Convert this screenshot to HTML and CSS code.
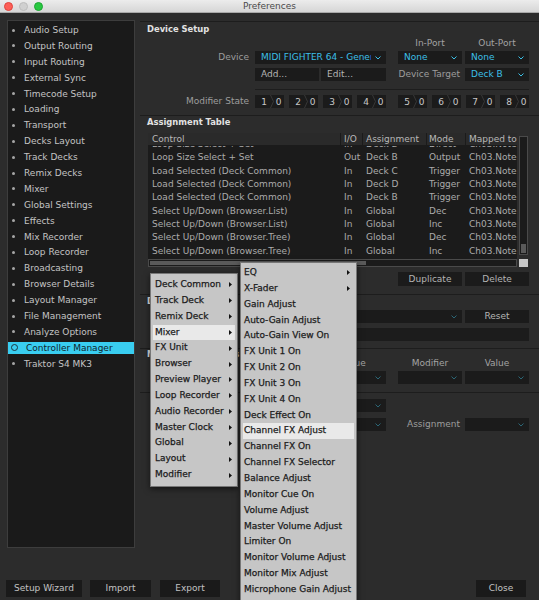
FILE: index.html
```html
<!DOCTYPE html>
<html>
<head>
<meta charset="utf-8">
<title>Preferences</title>
<link rel="stylesheet" href="styles.css">
</head>
<body>
<div class="app">
  <header class="titlebar">
    <div class="lights"><span class="light red"></span><span class="light gray"></span><span class="light green"></span></div>
    <div class="title">Preferences</div>
  </header>

  <div class="content">
    <nav class="sidebar">
      <ul>
        <li>Audio Setup</li>
        <li>Output Routing</li>
        <li>Input Routing</li>
        <li>External Sync</li>
        <li>Timecode Setup</li>
        <li>Loading</li>
        <li>Transport</li>
        <li>Decks Layout</li>
        <li>Track Decks</li>
        <li>Remix Decks</li>
        <li>Mixer</li>
        <li>Global Settings</li>
        <li>Effects</li>
        <li>Mix Recorder</li>
        <li>Loop Recorder</li>
        <li>Broadcasting</li>
        <li>Browser Details</li>
        <li>Layout Manager</li>
        <li>File Management</li>
        <li>Analyze Options</li>
        <li class="sel">Controller Manager</li>
        <li>Traktor S4 MK3</li>
      </ul>
    </nav>

    <main class="main">
      <section class="sec sec1">
        <h2 class="hd hd1">Device Setup</h2>
        <div class="grow ports">
          <span class="plbl cc">In-Port</span>
          <span class="plbl cd">Out-Port</span>
        </div>
        <div class="grow r13 mt2">
          <span class="lbl">Device</span>
          <div class="dd cab on"><span class="ddt">MIDI FIGHTER 64 - Generic</span><svg class="chev" viewBox="0 0 6 4"><polyline points="0.5,0.5 3,3 5.5,0.5"/></svg></div>
          <div class="dd cc on"><span class="ddt">None</span><svg class="chev" viewBox="0 0 6 4"><polyline points="0.5,0.5 3,3 5.5,0.5"/></svg></div>
          <div class="dd cd on"><span class="ddt">None</span><svg class="chev" viewBox="0 0 6 4"><polyline points="0.5,0.5 3,3 5.5,0.5"/></svg></div>
        </div>
        <div class="grow r13 mt4">
          <div class="btn ca left">Add...</div>
          <div class="btn cb left">Edit...</div>
          <span class="lbl2 cc">Device Target</span>
          <div class="dd cd on"><span class="ddt">Deck B</span><svg class="chev" viewBox="0 0 6 4"><polyline points="0.5,0.5 3,3 5.5,0.5"/></svg></div>
        </div>
        <div class="grow sepr">
          <div class="sep cabcd"></div>
        </div>
        <div class="grow r13 mt5">
          <span class="lbl">Modifier State</span>
          <div class="mods cab">
            <div class="mod"><span class="mk">1</span><svg class="mdiv" viewBox="0 0 4 13"><polyline points="0.5,0 3.5,6.5 0.5,13"/></svg><span class="mv">0</span></div>
            <div class="mod"><span class="mk">2</span><svg class="mdiv" viewBox="0 0 4 13"><polyline points="0.5,0 3.5,6.5 0.5,13"/></svg><span class="mv">0</span></div>
            <div class="mod"><span class="mk">3</span><svg class="mdiv" viewBox="0 0 4 13"><polyline points="0.5,0 3.5,6.5 0.5,13"/></svg><span class="mv">0</span></div>
            <div class="mod"><span class="mk">4</span><svg class="mdiv" viewBox="0 0 4 13"><polyline points="0.5,0 3.5,6.5 0.5,13"/></svg><span class="mv">0</span></div>
          </div>
          <div class="mods ccd">
            <div class="mod"><span class="mk">5</span><svg class="mdiv" viewBox="0 0 4 13"><polyline points="0.5,0 3.5,6.5 0.5,13"/></svg><span class="mv">0</span></div>
            <div class="mod"><span class="mk">6</span><svg class="mdiv" viewBox="0 0 4 13"><polyline points="0.5,0 3.5,6.5 0.5,13"/></svg><span class="mv">0</span></div>
            <div class="mod"><span class="mk">7</span><svg class="mdiv" viewBox="0 0 4 13"><polyline points="0.5,0 3.5,6.5 0.5,13"/></svg><span class="mv">0</span></div>
            <div class="mod"><span class="mk">8</span><svg class="mdiv" viewBox="0 0 4 13"><polyline points="0.5,0 3.5,6.5 0.5,13"/></svg><span class="mv">0</span></div>
          </div>
        </div>
      </section>

      <section class="sec sec2">
        <h2 class="hd">Assignment Table</h2>
        <div class="tarea">
          <div class="tmain">
            <div class="tbl">
              <div class="thead">
                <span class="tc c1">Control</span><span class="tc c2">I/O</span><span class="tc c3">Assignment</span><span class="tc c4">Mode</span><span class="tc c5">Mapped to</span>
              </div>
              <div class="tbody">
                <div class="tscroll">
                  <div class="tr"><span class="tc c1">Loop Size Select + Set</span><span class="tc c2">In</span><span class="tc c3">Deck B</span><span class="tc c4">Direct</span><span class="tc c5">Ch03.Note</span></div>
                  <div class="tr"><span class="tc c1">Loop Size Select + Set</span><span class="tc c2">Out</span><span class="tc c3">Deck B</span><span class="tc c4">Output</span><span class="tc c5">Ch03.Note</span></div>
                  <div class="tr"><span class="tc c1">Load Selected (Deck Common)</span><span class="tc c2">In</span><span class="tc c3">Deck C</span><span class="tc c4">Trigger</span><span class="tc c5">Ch03.Note</span></div>
                  <div class="tr"><span class="tc c1">Load Selected (Deck Common)</span><span class="tc c2">In</span><span class="tc c3">Deck D</span><span class="tc c4">Trigger</span><span class="tc c5">Ch03.Note</span></div>
                  <div class="tr"><span class="tc c1">Load Selected (Deck Common)</span><span class="tc c2">In</span><span class="tc c3">Deck B</span><span class="tc c4">Trigger</span><span class="tc c5">Ch03.Note</span></div>
                  <div class="tr"><span class="tc c1">Select Up/Down (Browser.List)</span><span class="tc c2">In</span><span class="tc c3">Global</span><span class="tc c4">Dec</span><span class="tc c5">Ch03.Note</span></div>
                  <div class="tr"><span class="tc c1">Select Up/Down (Browser.List)</span><span class="tc c2">In</span><span class="tc c3">Global</span><span class="tc c4">Inc</span><span class="tc c5">Ch03.Note</span></div>
                  <div class="tr"><span class="tc c1">Select Up/Down (Browser.Tree)</span><span class="tc c2">In</span><span class="tc c3">Global</span><span class="tc c4">Dec</span><span class="tc c5">Ch03.Note</span></div>
                  <div class="tr"><span class="tc c1">Select Up/Down (Browser.Tree)</span><span class="tc c2">In</span><span class="tc c3">Global</span><span class="tc c4">Inc</span><span class="tc c5">Ch03.Note</span></div>
                </div>
              </div>
            </div>
            <div class="hscroll"><div class="hthumb"></div></div>
          </div>
          <div class="tside">
            <div class="vscroll"><div class="vthumb"></div></div>
            <div class="corner"></div>
          </div>
        </div>
        <div class="grow r14 mt5">
          <div class="btn cc">Duplicate</div>
          <div class="btn cd">Delete</div>
        </div>
      </section>

      <section class="sec sec3">
        <h2 class="hd">Device Mapping</h2>
        <div class="grow r13 mt3">
          <div class="dd cabc"><span class="ddt"></span><svg class="chev dim" viewBox="0 0 6 4"><polyline points="0.5,0.5 3,3 5.5,0.5"/></svg></div>
          <div class="btn cd">Reset</div>
        </div>
        <div class="grow r13 mt5">
          <div class="field cabcd"></div>
        </div>
      </section>

      <section class="sec sec4">
        <h2 class="hd hd4">Modifier Conditions</h2>
        <div class="grow labels">
          <span class="clbl cb">Value</span>
          <span class="clbl cc">Modifier</span>
          <span class="clbl cd">Value</span>
        </div>
        <div class="grow r13 mt3">
          <div class="dd ca"><span class="ddt"></span><svg class="chev dim" viewBox="0 0 6 4"><polyline points="0.5,0.5 3,3 5.5,0.5"/></svg></div>
          <div class="dd cb"><span class="ddt"></span><svg class="chev dim" viewBox="0 0 6 4"><polyline points="0.5,0.5 3,3 5.5,0.5"/></svg></div>
          <div class="dd cc"><span class="ddt"></span><svg class="chev dim" viewBox="0 0 6 4"><polyline points="0.5,0.5 3,3 5.5,0.5"/></svg></div>
          <div class="dd cd"><span class="ddt"></span><svg class="chev dim" viewBox="0 0 6 4"><polyline points="0.5,0.5 3,3 5.5,0.5"/></svg></div>
        </div>
      </section>

      <section class="sec sec5">
        <div class="grow r13 mt6">
          <div class="dd cab"><span class="ddt"></span><svg class="chev dim" viewBox="0 0 6 4"><polyline points="0.5,0.5 3,3 5.5,0.5"/></svg></div>
        </div>
        <div class="grow r13 mt6">
          <div class="dd cab"><span class="ddt"></span><svg class="chev dim" viewBox="0 0 6 4"><polyline points="0.5,0.5 3,3 5.5,0.5"/></svg></div>
          <span class="lbl2 cc">Assignment</span>
          <div class="dd cd"><span class="ddt"></span><svg class="chev dim" viewBox="0 0 6 4"><polyline points="0.5,0.5 3,3 5.5,0.5"/></svg></div>
        </div>
      </section>
    </main>
  </div>

  <footer class="footer">
    <div class="fbtn fb1">Setup Wizard</div>
    <div class="fbtn fb2">Import</div>
    <div class="fbtn fb3">Export</div>
    <div class="fbtn fb4">Close</div>
  </footer>

  <div class="menu ctx">
    <div class="mi"><span>Deck Common</span><svg class="arr" viewBox="0 0 3 5"><polygon points="0,0 3,2.5 0,5"/></svg></div>
    <div class="mi"><span>Track Deck</span><svg class="arr" viewBox="0 0 3 5"><polygon points="0,0 3,2.5 0,5"/></svg></div>
    <div class="mi"><span>Remix Deck</span><svg class="arr" viewBox="0 0 3 5"><polygon points="0,0 3,2.5 0,5"/></svg></div>
    <div class="mi hi"><span>Mixer</span><svg class="arr" viewBox="0 0 3 5"><polygon points="0,0 3,2.5 0,5"/></svg></div>
    <div class="mi"><span>FX Unit</span><svg class="arr" viewBox="0 0 3 5"><polygon points="0,0 3,2.5 0,5"/></svg></div>
    <div class="mi"><span>Browser</span><svg class="arr" viewBox="0 0 3 5"><polygon points="0,0 3,2.5 0,5"/></svg></div>
    <div class="mi"><span>Preview Player</span><svg class="arr" viewBox="0 0 3 5"><polygon points="0,0 3,2.5 0,5"/></svg></div>
    <div class="mi"><span>Loop Recorder</span><svg class="arr" viewBox="0 0 3 5"><polygon points="0,0 3,2.5 0,5"/></svg></div>
    <div class="mi"><span>Audio Recorder</span><svg class="arr" viewBox="0 0 3 5"><polygon points="0,0 3,2.5 0,5"/></svg></div>
    <div class="mi"><span>Master Clock</span><svg class="arr" viewBox="0 0 3 5"><polygon points="0,0 3,2.5 0,5"/></svg></div>
    <div class="mi"><span>Global</span><svg class="arr" viewBox="0 0 3 5"><polygon points="0,0 3,2.5 0,5"/></svg></div>
    <div class="mi"><span>Layout</span><svg class="arr" viewBox="0 0 3 5"><polygon points="0,0 3,2.5 0,5"/></svg></div>
    <div class="mi"><span>Modifier</span><svg class="arr" viewBox="0 0 3 5"><polygon points="0,0 3,2.5 0,5"/></svg></div>
  </div>

  <div class="menu sub">
    <div class="mi"><span>EQ</span><svg class="arr" viewBox="0 0 3 5"><polygon points="0,0 3,2.5 0,5"/></svg></div>
    <div class="mi"><span>X-Fader</span><svg class="arr" viewBox="0 0 3 5"><polygon points="0,0 3,2.5 0,5"/></svg></div>
    <div class="mi"><span>Gain Adjust</span></div>
    <div class="mi"><span>Auto-Gain Adjust</span></div>
    <div class="mi"><span>Auto-Gain View On</span></div>
    <div class="mi"><span>FX Unit 1 On</span></div>
    <div class="mi"><span>FX Unit 2 On</span></div>
    <div class="mi"><span>FX Unit 3 On</span></div>
    <div class="mi"><span>FX Unit 4 On</span></div>
    <div class="mi"><span>Deck Effect On</span></div>
    <div class="mi hi"><span>Channel FX Adjust</span></div>
    <div class="mi"><span>Channel FX On</span></div>
    <div class="mi"><span>Channel FX Selector</span></div>
    <div class="mi"><span>Balance Adjust</span></div>
    <div class="mi"><span>Monitor Cue On</span></div>
    <div class="mi"><span>Volume Adjust</span></div>
    <div class="mi"><span>Master Volume Adjust</span></div>
    <div class="mi"><span>Limiter On</span></div>
    <div class="mi"><span>Monitor Volume Adjust</span></div>
    <div class="mi"><span>Monitor Mix Adjust</span></div>
    <div class="mi"><span>Microphone Gain Adjust</span></div>
  </div>
</div>
</body>
</html>
```

FILE: styles.css
```css
* { box-sizing: border-box; }
html, body { margin: 0; padding: 0; }
body {
  width: 539px;
  height: 600px;
  overflow: hidden;
  background: #2c2c2c;
  font-family: "DejaVu Sans", "Liberation Sans", sans-serif;
  font-size: 9px;
  color: #c4c4c4;
}
.app { position: relative; width: 539px; height: 600px; overflow: hidden; }

/* title bar */
.titlebar {
  height: 13px;
  position: relative;
  background: linear-gradient(#ececec, #d6d6d6);
  border-bottom: 1px solid #a9a9a9;
  display: flex;
  align-items: center;
  justify-content: center;
}
.lights { position: absolute; left: 4px; top: 2px; display: flex; gap: 6px; }
.light { width: 9px; height: 9px; border-radius: 50%; display: block; }
.light.red { background: #fd5f57; border: 0.5px solid #e0443e; }
.light.gray { background: #d0d0d0; border: 0.5px solid #bdbdbd; }
.light.green { background: #28c840; border: 0.5px solid #1ea533; }
.title { color: #4a4a4a; font-size: 9px; line-height: 12px; }

/* content */
.content { display: flex; padding-top: 7px; height: 535px; }
.sidebar {
  width: 128px;
  margin-left: 7px;
  height: 528px;
  background: #1a1a1a;
  border: 1px solid #3d3d3d;
  padding-top: 3px;
}
.sidebar ul { list-style: none; margin: 0; padding: 0; }
.sidebar li {
  height: 12px;
  line-height: 12px;
  margin-bottom: 3.9px;
  display: flex;
  align-items: center;
  white-space: nowrap;
  color: #c4c4c4;
}
.sidebar li::before {
  content: "";
  width: 3px; height: 3px;
  border-radius: 50%;
  background: #a6a6a6;
  margin-left: 4px;
  margin-right: 9px;
  flex: none;
}
.sidebar li.sel { background: #39cdf0; color: #10242b; }
.sidebar li.sel::before {
  width: 5px; height: 5px;
  background: transparent;
  border: 1px solid #1d3540;
  margin-left: 3px;
  margin-right: 8px;
}

.main { flex: 1; padding-top: 1px; margin-left: 5px; }
.sec { border-top: 1px solid #1d1d1d; }
.sec1 { padding-bottom: 7px; }
.sec2 { padding-bottom: 8px; }
.sec3 { padding-bottom: 7px; }
.sec4 { padding-bottom: 8px; }
.hd {
  margin: 0;
  font-size: 8.4px;
  font-weight: bold;
  color: #e2e2e2;
  height: 12px;
  line-height: 12px;
  padding-left: 7px;
  white-space: nowrap;
}
.hd1 { height: 14px; line-height: 14px; }
.hd4 { height: 9px; line-height: 11px; }

/* grid rows */
.grow {
  display: grid;
  grid-template-columns: 115px 64px 2px 65px 12px 64px 3px 64px;
  align-items: stretch;
}
.r13 { height: 13px; }
.r14 { height: 14px; }
.mt2 { margin-top: 2px; }
.mt3 { margin-top: 3px; }
.mt4 { margin-top: 4px; }
.mt5 { margin-top: 5px; }
.mt6 { margin-top: 6px; }
.ca { grid-column: 2; }
.cb { grid-column: 4; }
.cc { grid-column: 6; }
.cd { grid-column: 8; }
.cab { grid-column: 2 / 5; }
.ccd { grid-column: 6 / 9; }
.cabc { grid-column: 2 / 7; }
.cabcd { grid-column: 2 / 9; }

.ports { height: 12px; margin-top: 1px; }
.plbl { text-align: center; color: #a3a3a3; line-height: 12px; }
.labels { height: 10px; }
.clbl { text-align: center; color: #a3a3a3; line-height: 10px; }

.lbl {
  grid-column: 1;
  text-align: right;
  padding-right: 6px;
  color: #9d9d9d;
  line-height: 13px;
  white-space: nowrap;
}
.lbl2 {
  text-align: right;
  color: #9d9d9d;
  line-height: 13px;
  white-space: nowrap;
  padding-right: 2px;
}

.dd {
  background: #1b1b1b;
  display: flex;
  align-items: center;
  padding-left: 6px;
  padding-right: 5px;
  overflow: hidden;
}
.ddt { flex: 1; overflow: hidden; white-space: nowrap; line-height: 13px; }
.dd.on .ddt { color: #3bbfe6; }
.chev { width: 6px; height: 4px; flex: none; margin-left: 4px; }
.chev polyline { fill: none; stroke: #3bbfe6; stroke-width: 1; }
.chev.dim polyline { stroke: #2b6676; }

.btn {
  background: #1b1b1b;
  color: #b4b4b4;
  text-align: center;
  line-height: 13px;
  white-space: nowrap;
}
.r14 .btn { line-height: 14px; }
.btn.left { text-align: left; padding-left: 6px; }
.field { background: #1c1c1c; }

.sepr { margin-top: 8px; height: 1px; }
.sep { background: #1d1d1d; height: 1px; }

.mods { display: flex; gap: 5px; }
.mod {
  width: 29px;
  background: #1b1b1b;
  display: flex;
  align-items: center;
  color: #c8c8c8;
}
.mk { width: 12px; text-align: right; }
.mdiv { width: 4px; height: 13px; margin-left: 3px; }
.mdiv polyline { fill: none; stroke: #383838; stroke-width: 1; }
.mv { flex: 1; text-align: center; padding-right: 1px; }

/* table */
.tarea { display: flex; margin-left: 8px; margin-top: 5px; height: 134px; }
.tmain { width: 369px; }
.tbl { height: 126px; background: #1b1b1b; }
.thead {
  display: flex;
  height: 13px;
  background: #2a2a2a;
  border-bottom: 1px solid #1b1b1b;
  color: #b8b8b8;
}
.thead .tc { border-right: 1px solid #1b1b1b; line-height: 12px; }
.thead .tc.c5 { border-right: none; }
.tbody { height: 113px; overflow: hidden; }
.tscroll { margin-top: -8px; }
.tr { display: flex; height: 13.33px; line-height: 13.33px; color: #ababab; }
.tc { overflow: hidden; white-space: nowrap; padding-left: 3px; flex: none; }
.c1 { width: 193px; padding-left: 4px; }
.c2 { width: 22px; }
.c3 { width: 64px; }
.c4 { width: 39px; padding-left: 2px; }
.c5 { width: 51px; }
.hscroll {
  height: 8px;
  background: #1b1b1b;
  border: 1px solid #4a4a4a;
  padding: 1px;
}
.hthumb { width: 216px; height: 100%; background: #5a5a5a; }
.tside { width: 9px; margin-left: 2px; }
.vscroll {
  margin-top: 3px;
  height: 119px;
  border: 1px solid #4a4a4a;
  background: #1b1b1b;
  padding: 1px;
  display: flex;
  flex-direction: column;
  justify-content: flex-end;
}
.vthumb { height: 9px; background: #5a5a5a; }
.corner { margin-top: 4px; height: 8px; background: #c8c8c8; }

/* footer */
.footer {
  display: flex;
  padding-top: 32px;
  padding-left: 6px;
  height: 52px;
}
.fbtn {
  height: 17px;
  line-height: 17px;
  background: #1a1a1a;
  color: #c2c2c2;
  text-align: center;
  white-space: nowrap;
}
.fb1 { width: 76px; }
.fb2 { width: 61px; margin-left: 8px; }
.fb3 { width: 60px; margin-left: 9px; }
.fb4 { width: 50px; margin-left: auto; margin-right: 13px; }

/* menus */
.menu {
  position: absolute;
  background: #c6c6c6;
  border: 1px solid #777;
  box-shadow: 0 2px 6px rgba(0,0,0,0.55);
  color: #1b1b1b;
}
.ctx { left: 150px; top: 273px; width: 88px; padding: 3px 0; }
.sub { left: 240px; top: 262px; width: 117px; padding: 2px 0 8px; }
.mi {
  height: 15.85px;
  line-height: 15.85px;
  margin: 0 2px;
  padding-left: 2px;
  padding-right: 3px;
  display: flex;
  align-items: center;
  justify-content: space-between;
  white-space: nowrap;
  -webkit-text-stroke: 0.25px #1b1b1b;
}
.sub .mi { padding-left: 1px; padding-right: 4px; }
.mi.hi { background: #e9e9e9; }
.arr { width: 3px; height: 5px; flex: none; }
.arr polygon { fill: #111; }
```
